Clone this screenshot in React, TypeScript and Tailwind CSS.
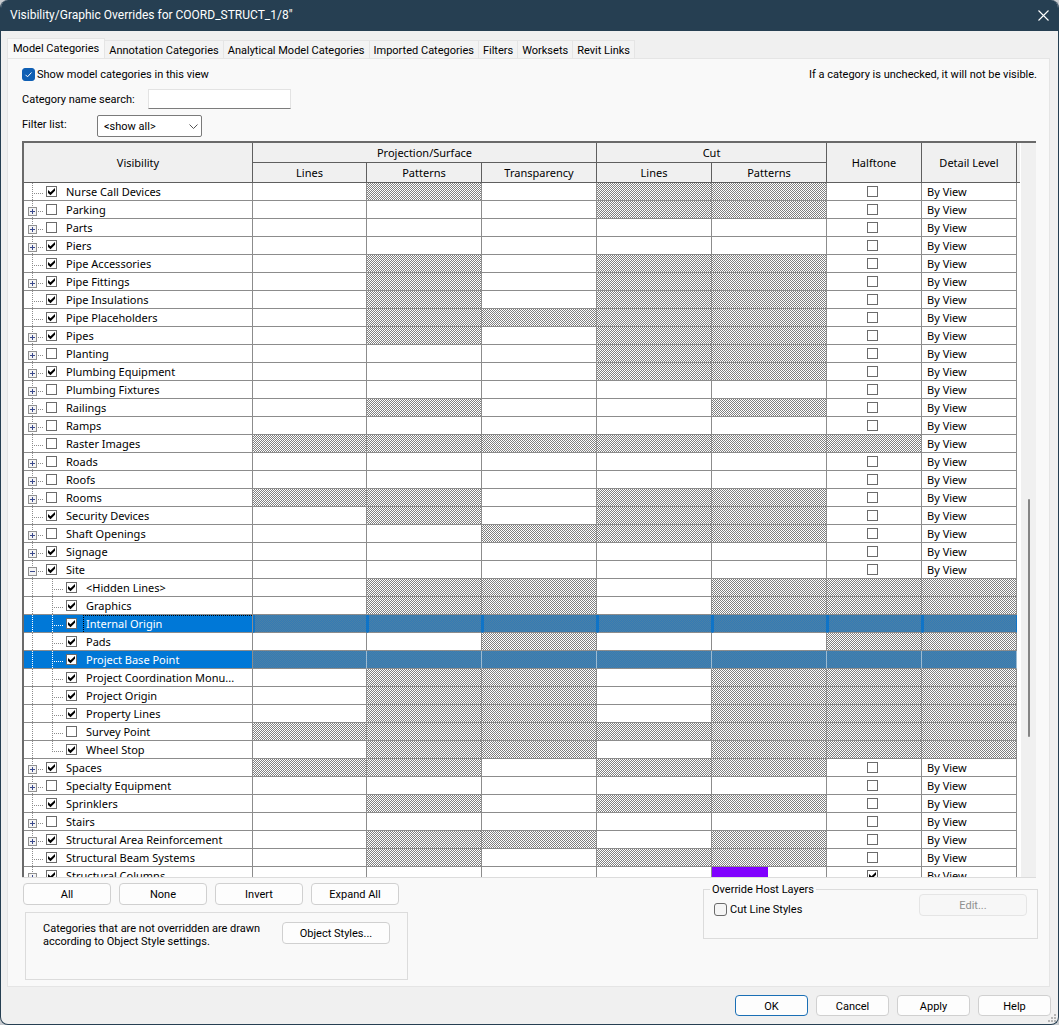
import { FC, ReactNode } from 'react'

type RowData = {
  name: string
  // + collapsed, - expanded, . leaf, c child, l last child
  node: '+' | '-' | '.' | 'c' | 'l'
  checked: boolean
  // one flag per column after Visibility, 1 = not available
  off: string
  selected?: boolean
  focused?: boolean
  halftone?: boolean
  pattern?: boolean
}

const rows: RowData[] = [
  { name: 'Nurse Call Devices', node: '.', checked: true, off: '0101100' },
  { name: 'Parking', node: '+', checked: false, off: '0001100' },
  { name: 'Parts', node: '+', checked: false, off: '0000000' },
  { name: 'Piers', node: '+', checked: true, off: '0000000' },
  { name: 'Pipe Accessories', node: '.', checked: true, off: '0101100' },
  { name: 'Pipe Fittings', node: '+', checked: true, off: '0101100' },
  { name: 'Pipe Insulations', node: '.', checked: true, off: '0101100' },
  { name: 'Pipe Placeholders', node: '.', checked: true, off: '0111100' },
  { name: 'Pipes', node: '+', checked: true, off: '0101100' },
  { name: 'Planting', node: '+', checked: false, off: '0001100' },
  { name: 'Plumbing Equipment', node: '+', checked: true, off: '0001100' },
  { name: 'Plumbing Fixtures', node: '+', checked: false, off: '0000000' },
  { name: 'Railings', node: '+', checked: false, off: '0100100' },
  { name: 'Ramps', node: '+', checked: false, off: '0000000' },
  { name: 'Raster Images', node: '.', checked: false, off: '1111110' },
  { name: 'Roads', node: '+', checked: false, off: '0000000' },
  { name: 'Roofs', node: '+', checked: false, off: '0000000' },
  { name: 'Rooms', node: '+', checked: false, off: '1101100' },
  { name: 'Security Devices', node: '.', checked: true, off: '0101100' },
  { name: 'Shaft Openings', node: '+', checked: false, off: '0011100' },
  { name: 'Signage', node: '+', checked: true, off: '0000000' },
  { name: 'Site', node: '-', checked: true, off: '0000000' },
  { name: '<Hidden Lines>', node: 'c', checked: true, off: '0110111' },
  { name: 'Graphics', node: 'c', checked: true, off: '0110111' },
  { name: 'Internal Origin', node: 'c', checked: true, off: '1111111', selected: true, focused: true },
  { name: 'Pads', node: 'c', checked: true, off: '0010011' },
  { name: 'Project Base Point', node: 'c', checked: true, off: '1111111', selected: true },
  { name: 'Project Coordination Monu...', node: 'c', checked: true, off: '0110111' },
  { name: 'Project Origin', node: 'c', checked: true, off: '0110111' },
  { name: 'Property Lines', node: 'c', checked: true, off: '0110111' },
  { name: 'Survey Point', node: 'c', checked: false, off: '1111111' },
  { name: 'Wheel Stop', node: 'l', checked: true, off: '0110111' },
  { name: 'Spaces', node: '+', checked: true, off: '1101100' },
  { name: 'Specialty Equipment', node: '+', checked: false, off: '0000000' },
  { name: 'Sprinklers', node: '.', checked: true, off: '0101100' },
  { name: 'Stairs', node: '+', checked: false, off: '0000000' },
  { name: 'Structural Area Reinforcement', node: '+', checked: true, off: '0110100' },
  { name: 'Structural Beam Systems', node: '.', checked: true, off: '0101100' },
  { name: 'Structural Columns', node: '+', checked: true, off: '0000000', halftone: true, pattern: true },
]

const tabs = [
  'Annotation Categories',
  'Analytical Model Categories',
  'Imported Categories',
  'Filters',
  'Worksets',
  'Revit Links',
]

const GridCheckbox: FC<{ label: string; checked: boolean; id?: string }> = ({ label, checked, id }) => (
  <span className="grid h-[11px] w-[11px] shrink-0">
    <input
      id={id}
      type="checkbox"
      aria-label={id ? undefined : label}
      defaultChecked={checked}
      className="peer col-start-1 row-start-1 h-[11px] w-[11px] appearance-none border border-[#6b6b6b] bg-white"
    />
    <svg
      viewBox="0 0 11 11"
      className="pointer-events-none col-start-1 row-start-1 hidden h-[11px] w-[11px] peer-checked:block"
    >
      <path d="M2 4v3l2.5 2.3L9 4.8V2L4.500 6.300z" fill="#000" />
    </svg>
  </span>
)

const TreeLines: FC<{ node: RowData['node']; selected?: boolean }> = ({ node, selected }) => {
  const stroke = selected ? '#ffffff' : '#8c8c8c'
  const isChild = node === 'c' || node === 'l'
  const hasBox = node === '+' || node === '-'

  return (
    <svg
      width={isChild ? 42 : 22}
      height="18"
      shapeRendering="crispEdges"
      fill="none"
      className="block shrink-0"
    >
      <path d="M8.500 0V18" stroke={stroke} strokeDasharray="1 1" />
      {!isChild && <path d="M10 10.500H19" stroke={stroke} strokeDasharray="1 1" />}
      {isChild && (
        <>
          <path d={node === 'l' ? 'M28.500 0V11' : 'M28.500 0V18'} stroke={stroke} strokeDasharray="1 1" />
          <path d="M30 10.500H39" stroke={stroke} strokeDasharray="1 1" />
        </>
      )}
      {hasBox && (
        <>
          <rect x="4.500" y="6.500" width="8" height="8" fill="#f4f4f4" stroke="#919191" />
          <path d="M6 10.500h5" stroke="#3b4a8c" />
          {node === '+' && <path d="M8.500 8v5" stroke="#3b4a8c" />}
        </>
      )}
    </svg>
  )
}

const CategoryRow: FC<{ row: RowData }> = ({ row }) => {
  const { name, node, checked, off, selected, focused, halftone, pattern } = row
  const id = `cat-${name.replace(/\W+/g, '-')}`
  const hasBox = node === '+' || node === '-'

  const cellClass = (disabled: boolean) => {
    if (selected) {
      const edge = focused
        ? 'border-l-2 border-l-[#0f74c8] border-r-[#0f74c8]'
        : 'border-r-[#9dbbd2]'
      return `${edge} bg-[repeating-conic-gradient(#347bb4_0_25%,#4a80a8_0_50%)] bg-[length:2px_2px]`
    }
    return disabled
      ? 'border-r-[#8c8c8c] bg-[repeating-conic-gradient(#808080_0_25%,#ffffff_0_50%)] bg-[length:2px_2px]'
      : 'border-r-[#8c8c8c]'
  }

  return (
    <tr className="h-[18px]">
      <td className={`border-r border-b border-[#8c8c8c] p-0 ${selected ? 'bg-[#0078d7] text-white' : ''}`}>
        <div className="flex h-[17px] items-center overflow-hidden">
          {hasBox ? (
            <button type="button" aria-label={`Toggle ${name}`} className="h-[17px]">
              <TreeLines node={node} />
            </button>
          ) : (
            <span className="h-[17px]">
              <TreeLines node={node} selected={selected} />
            </span>
          )}
          <GridCheckbox id={id} label={name} checked={checked} />
          <label
            htmlFor={id}
            className={`ml-1.5 h-[17px] flex-1 truncate border-t border-l pl-[2px] leading-[16px] ${
              focused ? 'border-dotted border-black' : 'border-transparent'
            }`}
          >
            {name}
          </label>
        </div>
      </td>
      {off.split('').map((flag, i) => {
        const disabled = flag === '1'
        let content: ReactNode = null
        if (!disabled && i === 4 && pattern) content = <div className="h-[17px] w-14 bg-[#8000ff]" />
        if (!disabled && i === 5) {
          content = (
            <div className="flex h-[17px] items-center justify-center pr-1">
              <GridCheckbox label={`${name} halftone`} checked={!!halftone} />
            </div>
          )
        }
        if (!disabled && i === 6) content = <div className="h-[17px] truncate pl-[5px] leading-[18px]">By View</div>
        return (
          <td key={i} className={`border-r border-b border-b-[#8c8c8c] p-0 ${cellClass(disabled)}`}>
            {content}
          </td>
        )
      })}
    </tr>
  )
}

const headClass = 'border-r border-b border-[#5f5f5f] bg-[#f0f0f0] p-0 text-center font-normal'

const CategoryTable: FC = () => (
  <div className="flex min-h-0 flex-1 overflow-hidden border-t-2 border-b border-t-[#6a6a6a] border-b-[#dcdcdc]">
    <div className="min-w-0 flex-1 overflow-hidden border-l-2 border-[#6a6a6a] bg-white">
      <table className="w-full table-fixed border-separate border-spacing-0">
        <colgroup>
          <col className="w-[229px]" />
          <col className="w-[114px]" />
          <col className="w-[115px]" />
          <col className="w-[115px]" />
          <col className="w-[115px]" />
          <col className="w-[115px]" />
          <col className="w-[95px]" />
          <col className="w-[95px]" />
        </colgroup>
        <thead>
          <tr className="h-5">
            <th rowSpan={2} className={headClass}>Visibility</th>
            <th colSpan={3} className={headClass}>Projection/Surface</th>
            <th colSpan={2} className={headClass}>Cut</th>
            <th rowSpan={2} className={headClass}>Halftone</th>
            <th rowSpan={2} className={headClass}>Detail Level</th>
          </tr>
          <tr className="h-5">
            <th className={headClass}>Lines</th>
            <th className={headClass}>Patterns</th>
            <th className={headClass}>Transparency</th>
            <th className={headClass}>Lines</th>
            <th className={headClass}>Patterns</th>
          </tr>
        </thead>
        <tbody>
          {rows.map((row) => (
            <CategoryRow key={row.name} row={row} />
          ))}
        </tbody>
      </table>
    </div>
    <div className="w-1 shrink-0 bg-white">
      <div className="h-10 w-[3px] border-b border-[#5f5f5f] bg-[#f0f0f0]" />
    </div>
    <div className="flex w-[15px] shrink-0 flex-col bg-[#f0f0f0] pl-[7px]">
      <div className="flex-[356]" />
      <div className="w-[2px] flex-[238] rounded-full bg-[#858585]" />
      <div className="flex-[140]" />
    </div>
  </div>
)

const Button: FC<{ children: ReactNode; className?: string; disabled?: boolean }> = ({
  children,
  className = '',
  disabled,
}) => (
  <button
    type="button"
    disabled={disabled}
    className={`rounded border text-center ${
      disabled ? 'border-[#e5e5e5] bg-[#f7f7f7] text-[#8f8f8f]' : 'bg-[#fdfdfd]'
    } ${className}`}
  >
    {children}
  </button>
)

const App: FC = () => (
  <div className="h-screen bg-[#c9ccd0] font-['Roboto','Noto_Sans',sans-serif] text-[11px] leading-[13px] text-black">
    <div className="flex h-full flex-col overflow-hidden rounded-lg border-x border-b border-[#263f52] bg-[#f0f0f0]">
      <header className="flex h-[31px] shrink-0 items-center justify-between bg-[#263f52] px-[9px] text-white">
        <h1 className="text-[12px]">Visibility/Graphic Overrides for COORD_STRUCT_1/8"</h1>
        <button type="button" aria-label="Close">
          <svg width="11" height="11" viewBox="0 0 11 11" stroke="#fff" strokeWidth="1.100">
            <path d="M.5.5l10 10M10.500.5l-10 10" />
          </svg>
        </button>
      </header>

      <nav role="tablist" className="flex h-[27px] shrink-0 items-end pl-1.5">
        <button
          type="button"
          role="tab"
          aria-selected="true"
          className="-mb-px h-[21px] border border-b-0 border-[#e5e5e5] bg-[#f9f9f9] px-[5px] pb-0.5"
        >
          Model Categories
        </button>
        {tabs.map((tab) => (
          <button
            key={tab}
            type="button"
            role="tab"
            aria-selected="false"
            className="h-[18px] border-t border-r border-[#e5e5e5] bg-[#f3f3f3] px-1 pt-0.5"
          >
            {tab}
          </button>
        ))}
      </nav>

      <main className="mr-2 ml-1.5 flex min-h-0 flex-1 flex-col border border-[#e5e5e5] bg-[#f9f9f9] pr-3 pb-1.5 pl-3.5">
        <div className="flex h-[30px] shrink-0 items-center justify-between pt-px">
          <label className="flex items-center gap-[2px]">
            <span className="grid h-[13px] w-[13px]">
              <input
                type="checkbox"
                defaultChecked
                className="peer col-start-1 row-start-1 h-[13px] w-[13px] appearance-none rounded-[3px] border border-[#6b6b6b] bg-white checked:border-[#0f5fb4] checked:bg-[#0f5fb4]"
              />
              <svg
                viewBox="0 0 13 13"
                fill="none"
                stroke="#fff"
                className="pointer-events-none col-start-1 row-start-1 hidden h-[13px] w-[13px] peer-checked:block"
              >
                <path d="M3.500 6.800l2 2 4-4.300" />
              </svg>
            </span>
            Show model categories in this view
          </label>
          <p>If a category is unchecked, it will not be visible.</p>
        </div>

        <div className="flex h-5 shrink-0 items-center">
          <label htmlFor="search" className="w-[126px] pt-px">Category name search:</label>
          <input
            id="search"
            type="text"
            className="h-5 w-[143px] border border-[#e3e3e3] border-b-[#7c7c7c] bg-white px-1"
          />
        </div>

        <div className="mt-1.5 flex h-[22px] shrink-0 items-center">
          <label htmlFor="filter" className="w-[75px] pb-1">Filter list:</label>
          <span className="grid items-center">
            <select
              id="filter"
              className="col-start-1 row-start-1 h-[22px] w-[105px] appearance-none rounded-[2px] border border-[#7a7a7a] bg-white pl-1.5"
            >
              <option>&lt;show all&gt;</option>
            </select>
            <svg
              width="9"
              height="5"
              fill="none"
              stroke="#555"
              className="pointer-events-none col-start-1 row-start-1 mr-1 justify-self-end"
            >
              <path d="M.5.5l4 4 4-4" />
            </svg>
          </span>
        </div>

        <div className="mt-1 flex min-h-0 flex-1 flex-col pr-px font-['Noto_Sans','Open_Sans',sans-serif]">
          <CategoryTable />
        </div>

        <div className="flex shrink-0 justify-between">
          <div>
            <div className="mt-[5px] flex gap-2 pl-px">
              {['All', 'None', 'Invert', 'Expand All'].map((text) => (
                <Button key={text} className="h-[22px] w-[88px] border-[#d0d0d0]">{text}</Button>
              ))}
            </div>
            <div className="mt-[7px] ml-[3px] flex h-[68px] w-[383px] items-start justify-between border border-[#dcdcdc] py-[9px] pr-[17px] pl-[17px]">
              <p>
                Categories that are not overridden are drawn
                <br />
                according to Object Style settings.
              </p>
              <Button className="h-[22px] w-[108px] border-[#d0d0d0]">Object Styles...</Button>
            </div>
          </div>

          <fieldset className="mt-[5px] -mr-px flex h-[56px] w-[335px] items-start justify-between border border-[#dcdcdc] px-2.5">
            <legend className="-ml-1 px-0.5">Override Host Layers</legend>
            <label className="mt-[7px] flex items-center gap-[3px]">
              <input
                type="checkbox"
                className="h-[13px] w-[13px] appearance-none rounded-[3px] border border-[#6b6b6b] bg-[#f5f5f5]"
              />
              Cut Line Styles
            </label>
            <Button disabled className="-mt-0.5 h-[22px] w-[108px]">Edit...</Button>
          </fieldset>
        </div>
      </main>

      <footer className="flex h-[37px] shrink-0 items-start justify-end gap-2 pt-2 pr-[7px]">
        <Button className="h-[21px] w-[73px] border-[#1a6fb5] pt-px">OK</Button>
        <Button className="h-[21px] w-[73px] border-[#d0d0d0] pt-px">Cancel</Button>
        <Button className="h-[21px] w-[73px] border-[#d0d0d0] pt-px">Apply</Button>
        <Button className="h-[21px] w-[73px] border-[#d0d0d0] pt-px">Help</Button>
        <svg width="9" height="9" fill="#b5b5b5" className="pointer-events-none absolute right-0.5 bottom-0.5">
          <path d="M6 0h2v2H6zM6 3h2v2H6zM3 3h2v2H3zM6 6h2v2H6zM3 6h2v2H3zM0 6h2v2H0z" />
        </svg>
      </footer>
    </div>
  </div>
)

export default App
